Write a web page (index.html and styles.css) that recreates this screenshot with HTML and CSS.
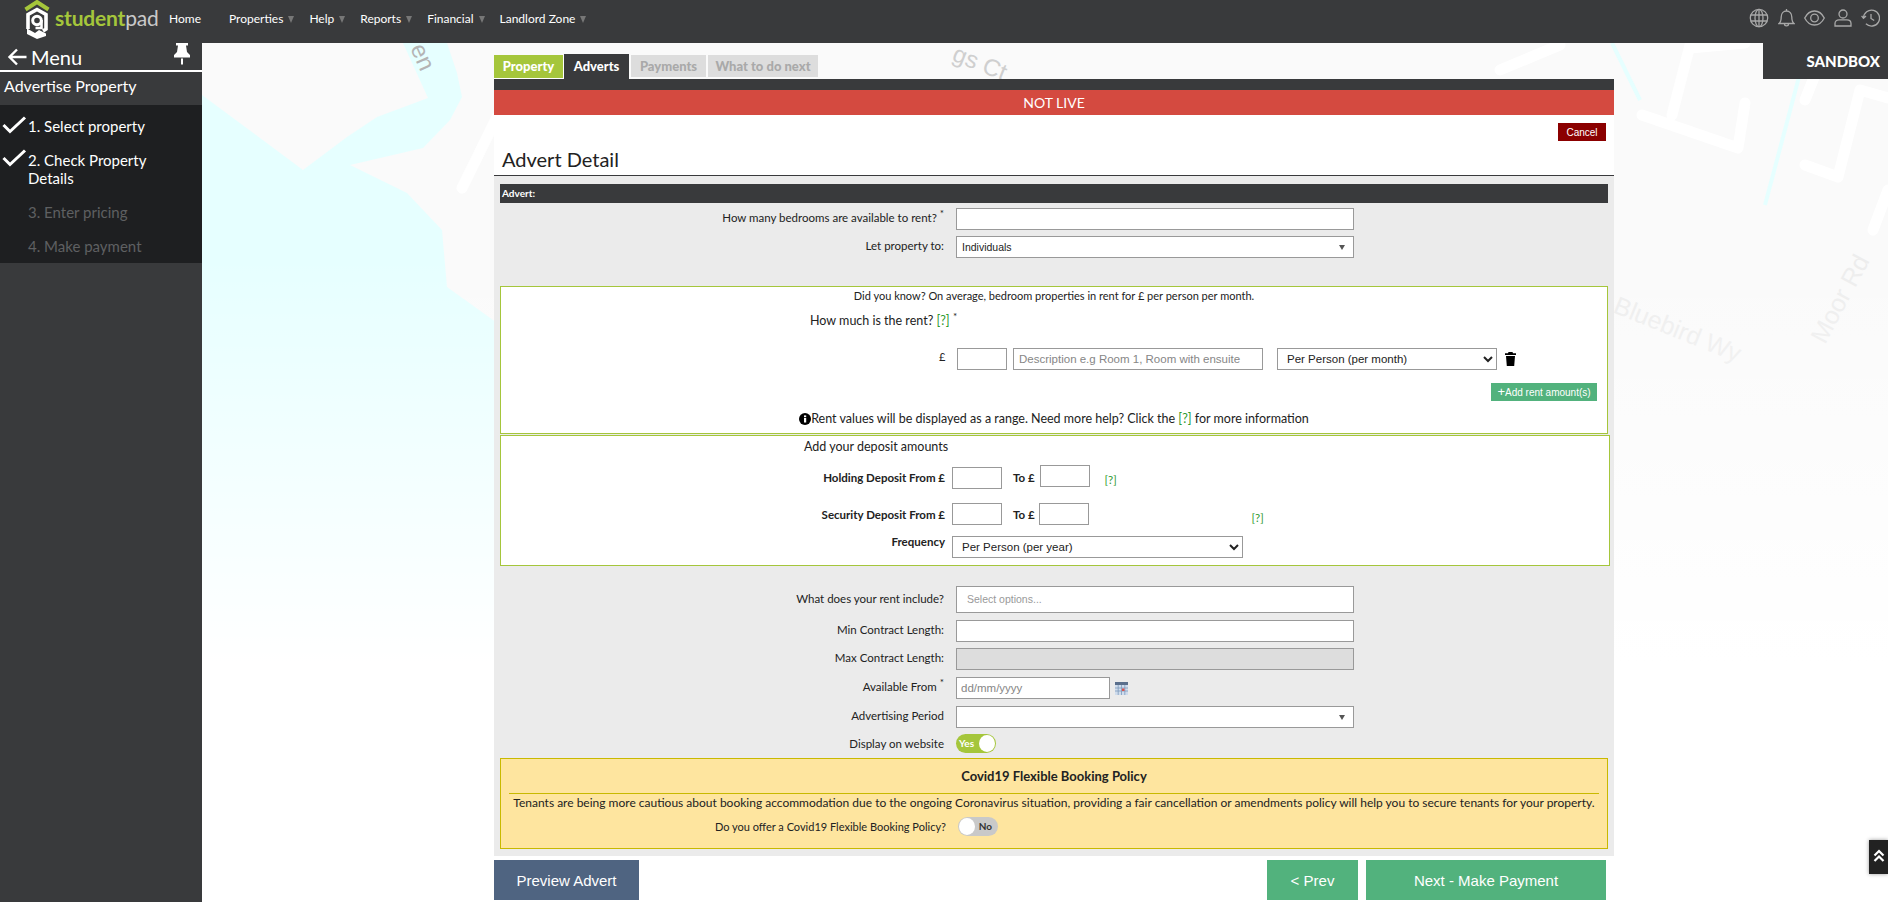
FILE: index.html
```html
<!DOCTYPE html>
<html>
<head>
  <meta charset="UTF-8" />
  <title>Advertise Property</title>
  <link rel="stylesheet" href="styles.css">
</head>
<body>
  <header class="topbar">
    <a class="logo">
      <svg width="26" height="40" viewBox="0 0 26 40">
        <path d="M1.5 9.5 13 2l11.500 7.500" fill="none" stroke="#a5c63b" stroke-width="4"/>
        <path d="M4 29V14.500L13 9.500l9 5V29l-3 2" fill="none" stroke="#fff" stroke-width="3.600"/>
        <path d="M3 28.500l8 4.500 4-3 7 3.500v2.500L13 39 3 34z" fill="#fff"/>
        <circle cx="13" cy="20.500" r="4.300" fill="none" stroke="#fff" stroke-width="3"/>
        <path d="M17.500 20v8h-6" fill="none" stroke="#fff" stroke-width="2.600"/>
      </svg>
      <span class="logo-text"><b>student</b>pad</span>
    </a>
    <nav class="nav">
      <a class="nav-home">Home</a>
      <a class="nav-props">Properties<i></i></a>
      <a class="nav-help">Help<i></i></a>
      <a class="nav-reports">Reports<i></i></a>
      <a class="nav-fin">Financial<i></i></a>
      <a>Landlord Zone<i></i></a>
    </nav>
    <div class="top-icons">
      <svg width="20" height="20" viewBox="0 0 20 20"><circle cx="10" cy="10" r="8.700"/><ellipse cx="10" cy="10" rx="4" ry="8.700"/><path d="M10 1.300v17.400M1.800 7h16.400M1.800 13h16.400"/></svg>
      <svg width="17" height="20" viewBox="0 0 17 20"><path d="M1 15.500c2-1.500 2.200-3.500 2.200-6.500 0-3.500 2.300-6 5.300-6s5.300 2.500 5.300 6c0 3 .2 5 2.200 6.500zM8.500 1v2M6.500 16c0 2.500 4 2.500 4 0"/></svg>
      <svg width="21" height="16" viewBox="0 0 21 16"><path d="M.7 8C3 3.500 6.500 1 10.500 1s7.500 2.500 9.800 7c-2.300 4.500-5.800 7-9.800 7S3 12.500.7 8z"/><circle cx="10.500" cy="8" r="3.800"/></svg>
      <svg width="18" height="18" viewBox="0 0 18 18"><circle cx="9" cy="5" r="4"/><path d="M1 17v-2.500C1 12 3 10.800 5 10.800h8c2 0 4 1.200 4 3.700V17z"/></svg>
      <svg width="19" height="18" viewBox="0 0 19 18"><path d="M2.500 9a8 8 0 1 1 2.400 5.800M.6 6.800 2.500 9.300 5 7M10 5v4.500l3.200 2"/></svg>
    </div>
  </header>

  <div class="page">
    <aside class="sidebar">
      <div class="menu-head">
        <svg width="20" height="18" viewBox="0 0 20 18"><path d="M19.500 9H3M10 1.500 2.500 9l7.500 7.500" fill="none" stroke="#fff" stroke-width="2.400"/></svg>
        <span>Menu</span>
        <svg class="pin" width="16" height="22" viewBox="0 0 16 22"><path d="M2 0h12v2.500h-2l1 6.500 3 3v2.500H0V12l3-3 1-6.500H2z" fill="#fff"/><rect x="7" y="15.500" width="2" height="6" fill="#fff"/></svg>
      </div>
      <div class="menu-title">Advertise Property</div>
      <ul class="steps">
        <li class="done step-one"><svg width="25" height="18" viewBox="0 0 25 18"><path d="M1.500 9 8 15.500 23 1.500" fill="none" stroke="#fff" stroke-width="3"/></svg>1. Select property</li>
        <li class="done step-two"><svg width="25" height="18" viewBox="0 0 25 18"><path d="M1.500 9 8 15.500 23 1.500" fill="none" stroke="#fff" stroke-width="3"/></svg>2. Check Property Details</li>
        <li class="todo">3. Enter pricing</li>
        <li class="todo">4. Make payment</li>
      </ul>
    </aside>

    <main class="content">
      <svg class="map" width="1686" height="859" viewBox="202 43 1686 859">
        <defs>
          <linearGradient id="fade" x1="0" y1="0" x2="0" y2="1">
            <stop offset="0.25" stop-color="#fff" stop-opacity="0"/>
            <stop offset="0.72" stop-color="#fff" stop-opacity="1"/>
          </linearGradient>
        </defs>
        <rect x="202" y="43" width="1686" height="859" fill="#fafafa"/>
        <path d="M202 95 303 170 347 137 377 117 428 98 403 43H447L457 73 462 97 450 120 423 148 350 165 407 193 442 230 447 287 500 325V760H202Z" fill="#e6ffff"/>
        <path d="M1808 43 1765 205" fill="none" stroke="#e6ffff" stroke-width="4"/>
        <path d="M1612 43 1640 100" fill="none" stroke="#e6ffff" stroke-width="4"/>
        <g fill="none" stroke="#fff" stroke-width="11" stroke-linecap="round" stroke-linejoin="round">
          <path d="M497 117 462 188"/>
          <path d="M1642 115 1738 148 1745 103M1672 115 1690 45M1690 48 1745 43"/>
          <path d="M1805 165 1838 177 1860 90 1888 98M1805 100 1815 75"/>
          <path d="M1873 230 1888 190"/>
          <path d="M1500 70 1560 45"/>
        </g>
        <text class="map-dark" transform="translate(410 48) rotate(66)">en</text>
        <text class="map-mid" transform="translate(951 60) rotate(22)">gs Ct</text>
        <text class="map-faint" transform="translate(1612 312) rotate(22)">Bluebird Wy</text>
        <text class="map-faint" transform="translate(1825 345) rotate(-62)">Moor Rd</text>
        <rect x="202" y="43" width="1686" height="859" fill="url(#fade)"/>
      </svg>

      <div class="sandbox">SANDBOX</div>

      <div class="panel">
        <div class="tabs">
          <a class="tab tab-done">Property</a>
          <a class="tab tab-active">Adverts</a>
          <a class="tab tab-off tab-pay">Payments</a>
          <a class="tab tab-off tab-next">What to do next</a>
        </div>
        <div class="tab-rule"></div>
        <div class="not-live">NOT LIVE</div>

        <div class="title-area">
          <button class="btn-cancel">Cancel</button>
          <h2>Advert Detail</h2>
        </div>

        <form class="form-area">
          <div class="section-bar">Advert:</div>

          <div class="row row-first">
            <label>How many bedrooms are available to rent? <sup>*</sup></label>
            <input class="field" type="text">
          </div>
          <div class="row row-let">
            <label>Let property to:</label>
            <div class="field pick">Individuals<i></i></div>
          </div>

          <section class="box box-rent">
            <p class="know">Did you know? On average, bedroom properties in rent for £ per person per month.</p>
            <p class="rent-q">How much is the rent? <a class="help">[?]</a> <sup>*</sup></p>
            <div class="rent-row">
              <span class="pound">£</span>
              <input class="field amount" type="text">
              <input class="field desc" type="text" placeholder="Description e.g Room 1, Room with ensuite">
              <select class="field rent-type"><option>Per Person (per month)</option></select>
              <svg class="trash" width="11" height="14" viewBox="0 0 11 14"><path d="M3.500 0h4l.5 1.200h3V3H0V1.200h3zM1 4h9l-.8 10H1.800z" fill="#000"/></svg>
            </div>
            <div class="add-row"><button type="button" class="btn-add"><b>+</b>Add rent amount(s)</button></div>
            <p class="note">
              <svg width="12" height="12" viewBox="0 0 12 12"><circle cx="6" cy="6" r="6" fill="#000"/><rect x="5" y="5" width="2.200" height="4.500" fill="#fff"/><rect x="5" y="2.400" width="2.200" height="1.800" fill="#fff"/></svg>Rent values will be displayed as a range. Need more help? Click the <a class="help">[?]</a> for more information
            </p>
          </section>

          <section class="box box-deposit">
            <p class="deposit-title">Add your deposit amounts</p>
            <div class="dep-row dep-holding">
              <label>Holding Deposit From £</label>
              <input class="field amount from" type="text">
              <label class="to">To £</label>
              <input class="field amount" type="text">
              <a class="help help-hold">[?]</a>
            </div>
            <div class="dep-row dep-security">
              <label>Security Deposit From £</label>
              <input class="field amount" type="text">
              <label class="to">To £</label>
              <input class="field amount" type="text">
              <a class="help help-sec">[?]</a>
            </div>
            <div class="dep-row dep-freq">
              <label>Frequency</label>
              <select class="field freq"><option>Per Person (per year)</option></select>
            </div>
          </section>

          <div class="row row-include">
            <label>What does your rent include?</label>
            <div class="field options">Select options...</div>
          </div>
          <div class="row row-min">
            <label>Min Contract Length:</label>
            <input class="field" type="text">
          </div>
          <div class="row row-max">
            <label>Max Contract Length:</label>
            <input class="field" type="text" disabled>
          </div>
          <div class="row row-avail">
            <label>Available From <sup>*</sup></label>
            <div class="date-wrap">
              <input class="field date" type="text" placeholder="dd/mm/yyyy">
              <svg width="13" height="13" viewBox="0 0 13 13"><rect width="13" height="13" fill="#cfdcec"/><rect width="13" height="3" fill="#5a6f8c"/><path d="M0 6h13M0 9h13M3.200 3v10M6.500 3v10M9.800 3v10" stroke="#7f9bbd" stroke-width=".8"/><rect x="7" y="6.500" width="2.500" height="2.500" fill="#d9534f"/></svg>
            </div>
          </div>
          <div class="row row-period">
            <label>Advertising Period</label>
            <div class="field pick"><i></i></div>
          </div>
          <div class="row row-display">
            <label>Display on website</label>
            <div class="toggle toggle-on"><span>Yes</span><i></i></div>
          </div>

          <section class="covid">
            <h3>Covid19 Flexible Booking Policy</h3>
            <p>Tenants are being more cautious about booking accommodation due to the ongoing Coronavirus situation, providing a fair cancellation or amendments policy will help you to secure tenants for your property.</p>
            <div class="covid-row">
              <label>Do you offer a Covid19 Flexible Booking Policy?</label>
              <div class="toggle toggle-off"><i></i><span>No</span></div>
            </div>
          </section>
        </form>

        <div class="actions">
          <button class="btn-big btn-preview">Preview Advert</button>
          <button class="btn-big btn-prev">&lt; Prev</button>
          <button class="btn-big btn-next">Next - Make Payment</button>
        </div>
      </div>
    </main>
  </div>

  <a class="to-top"><svg width="12" height="14" viewBox="0 0 12 14"><path d="M1.500 6.500 6 2l4.500 4.500M1.500 12 6 7.500l4.500 4.500" fill="none" stroke="#fff" stroke-width="2.200"/></svg></a>
</body>
</html>
```

FILE: styles.css
```css
* {
  box-sizing: border-box;
}
body {
  margin: 0;
  height: 902px;
  overflow: hidden;
  background: #fff;
  color: #222;
  font-family: Lato, "Liberation Sans", sans-serif;
  font-size: 12px;
}
p, h2, h3, ul {
  margin: 0;
  padding: 0;
}
sup {
  font-size: 10px;
  line-height: 0;
}

/* top bar */
.topbar {
  height: 43px;
  background: #393a3c;
  display: flex;
  align-items: flex-start;
}
.logo {
  display: flex;
  width: 169px;
  padding-left: 24px;
}
.logo-text {
  margin-left: 5px;
  margin-top: 4px;
  font-size: 21px;
  line-height: 28px;
  color: #c9c9c9;
  letter-spacing: -0.2px;
}
.logo-text b {
  color: #a5c63b;
  font-weight: 700;
}
.nav {
  display: flex;
  line-height: 38px;
  color: #fff;
  font-size: 12px;
}
.nav a {
  margin-right: 15px;
}
.nav a.nav-home {
  margin-right: 28px;
}
.nav i {
  display: inline-block;
  margin-left: 5px;
  border-left: 3px solid transparent;
  border-right: 3px solid transparent;
  border-top: 7px solid #777;
}
.top-icons {
  margin-left: auto;
  margin-right: 8px;
  margin-top: 8px;
  display: flex;
  align-items: center;
  gap: 9px;
}
.top-icons svg {
  fill: none;
  stroke: #a8a8a8;
  stroke-width: 1.300;
}

/* left menu */
.page {
  display: flex;
  height: 859px;
}
.sidebar {
  width: 202px;
  flex: none;
  background: #393a3c;
  color: #fff;
}
.menu-head {
  height: 29px;
  border-bottom: 2px solid #fff;
  display: flex;
  align-items: flex-start;
  font-size: 20px;
  line-height: 28px;
  padding-left: 7px;
}
.menu-head > svg:first-child {
  margin-top: 5px;
  margin-right: 4px;
}
.menu-head .pin {
  margin-left: auto;
  margin-right: 12px;
}
.menu-title {
  height: 33px;
  padding: 3px 0 0 4px;
  font-size: 16px;
  line-height: 22px;
}
.steps {
  list-style: none;
  background: #1e1f21;
  height: 158px;
  padding-left: 28px;
  font-size: 15px;
  line-height: 18px;
}
.steps li {
  position: relative;
  padding-right: 20px;
}
.steps svg {
  position: absolute;
  left: -26px;
  top: -3px;
}
.step-one {
  padding-top: 12px;
}
.steps .step-one svg {
  top: 11px;
}
.step-two {
  padding-top: 16px;
}
.steps .step-two svg {
  top: 14px;
}
.todo {
  color: #5f6062;
  padding-top: 16px;
}

/* map behind the form */
.content {
  position: relative;
  flex: 1;
  background: #fff;
  overflow: hidden;
}
.map {
  position: absolute;
  left: 0;
  top: 0;
}
.map text {
  font-family: "Liberation Sans", sans-serif;
}
.map-dark {
  font-size: 24px;
  fill: #b4b4b4;
}
.map-mid {
  font-size: 24px;
  fill: #cfcfcf;
}
.map-faint {
  font-size: 25px;
  fill: #ededed;
}
.sandbox {
  position: absolute;
  right: 0;
  top: 0;
  width: 125px;
  height: 36px;
  background: #393a3c;
  color: #fff;
  font-size: 15px;
  font-weight: 900;
  line-height: 36px;
  text-align: right;
  padding-right: 8px;
}

/* main panel */
.panel {
  position: relative;
  margin-left: 292px;
  margin-top: 11px;
  width: 1120px;
}
.tabs {
  display: flex;
  height: 25px;
  align-items: flex-end;
  font-size: 13px;
  font-weight: 900;
}
.tab {
  display: block;
  text-align: center;
}
.tab-done {
  width: 70px;
  height: 24px;
  line-height: 22px;
  background: #a5c63b;
  color: #fff;
  border-right: 1px solid #fff;
  border-bottom: 1px solid #fff;
}
.tab-active {
  width: 65px;
  height: 25px;
  line-height: 24px;
  background: #393a3c;
  color: #fff;
}
.tab-off {
  height: 22px;
  line-height: 22px;
  background: #ddd;
  color: #a9a9a9;
  margin-bottom: 2px;
}
.tab-pay {
  width: 75px;
  margin-left: 2px;
}
.tab-next {
  width: 110px;
  margin-left: 2px;
}
.tab-rule {
  height: 11px;
  background: #393a3c;
}
.not-live {
  height: 25px;
  background: #d44a40;
  color: #fff;
  font-size: 14px;
  line-height: 25px;
  text-align: center;
}
.title-area {
  height: 61px;
  background: #fff;
  border-bottom: 1px solid #393a3c;
  padding: 8px 8px 0;
}
.btn-cancel {
  display: block;
  margin-left: auto;
  width: 48px;
  height: 18px;
  padding: 0;
  border: 0;
  background: #8b0000;
  color: #fff;
  font-family: "Liberation Sans", sans-serif;
  font-size: 10px;
}
.title-area h2 {
  font-size: 20px;
  font-weight: 400;
  line-height: 24px;
  margin-top: 6px;
}

/* form */
.form-area {
  background: #ebebeb;
  padding: 8px 6px 7px;
}
.section-bar {
  height: 19px;
  background: #393a3c;
  color: #fff;
  font-size: 10px;
  font-weight: 700;
  line-height: 19px;
  padding-left: 2px;
}
.row {
  display: grid;
  grid-template-columns: 444px 398px;
  column-gap: 12px;
  height: 22px;
  margin-top: 6px;
}
.row label {
  text-align: right;
  font-size: 11.500px;
  line-height: 20px;
}
.row-first {
  margin-top: 5px;
}
.row-min,
.row-avail,
.row-period {
  margin-top: 7px;
}
.row-min {
  margin-top: 7px;
}
.row-max,
.row-display {
  margin-top: 6px;
}
.row-display {
  height: 19px;
}
.row-include {
  height: 27px;
  margin-top: 20px;
}
.row-include label {
  line-height: 25px;
}
.field {
  width: 100%;
  height: 22px;
  border: 1px solid #999;
  border-radius: 0;
  background: #fff;
  padding: 0 5px;
  margin: 0;
  font-family: "Liberation Sans", sans-serif;
  font-size: 11.500px;
  color: #222;
}
.field:disabled {
  background: #ddd;
}
.field::placeholder {
  color: #868686;
  opacity: 1;
}
.pick {
  display: flex;
  align-items: center;
  justify-content: space-between;
  padding-right: 8px;
  font-size: 10.500px;
}
.pick i {
  margin-left: auto;
  border-left: 3px solid transparent;
  border-right: 3px solid transparent;
  border-top: 5px solid #555;
}
.options {
  height: 27px;
  line-height: 25px;
  padding-left: 10px;
  font-size: 10.500px;
  color: #999;
}
.date-wrap {
  display: flex;
  align-items: center;
  gap: 5px;
}
.date {
  width: 154px;
  padding-left: 4px;
}

/* green boxes */
.box {
  background: #fff;
  border: 1px solid #a5c63b;
}
.box-rent {
  height: 148px;
  margin-top: 28px;
}
.box-deposit {
  height: 131px;
  margin-top: 1px;
  margin-right: -2px;
}
.know {
  line-height: 18px;
  font-size: 11px;
  text-align: center;
}
.rent-q {
  margin-top: 7px;
  padding-left: 309px;
  font-size: 12.500px;
  line-height: 18px;
}
.help {
  color: #2f9a2f;
}
.rent-row {
  margin-top: 18px;
  display: flex;
  align-items: flex-start;
  padding-left: 438px;
}
.pound {
  width: 18px;
  font-size: 11px;
  line-height: 18px;
}
.amount {
  width: 50px;
  flex: none;
}
.desc {
  width: 250px;
  margin-left: 6px;
  color: #888;
  padding-left: 5px;
}
.rent-type {
  width: 220px;
  margin-left: 14px;
  padding-left: 5px;
}
.trash {
  margin-left: 8px;
  margin-top: 4px;
}
.add-row {
  display: flex;
  justify-content: flex-end;
  margin-top: 13px;
  padding-right: 10px;
}
.btn-add {
  width: 106px;
  height: 18px;
  border: 0;
  padding: 0;
  background: #52b27d;
  color: #fff;
  font-family: "Liberation Sans", sans-serif;
  font-size: 10px;
  line-height: 18px;
}
.btn-add b {
  font-size: 13px;
  font-weight: 400;
}
.note {
  margin-top: 9px;
  font-size: 12.500px;
  line-height: 18px;
  text-align: center;
}
.note svg {
  vertical-align: -2px;
}
.deposit-title {
  padding: 2px 0 0 303px;
  font-size: 12.500px;
  line-height: 18px;
}
.dep-row {
  display: flex;
  align-items: flex-start;
  font-size: 11.500px;
}
.dep-row label {
  width: 444px;
  margin-right: 7px;
  text-align: right;
  font-weight: 700;
  line-height: 26px;
}
.dep-row .to {
  width: auto;
  margin: 0 5px 0 11px;
}
.dep-holding {
  margin-top: 9px;
  height: 24px;
}
.from {
  margin-top: 2px;
}
.help-hold {
  margin: 8px 0 0 15px;
}
.dep-security {
  margin-top: 14px;
  height: 22px;
}
.dep-security label {
  line-height: 24px;
}
.dep-security .to {
  margin-right: 4px;
}
.help-sec {
  margin: 8px 0 0 163px;
}
.dep-freq {
  margin-top: 11px;
}
.dep-freq label {
  line-height: 11px;
}
.freq {
  width: 291px;
  padding-left: 5px;
}

/* toggles */
.toggle {
  width: 40px;
  height: 19px;
  border-radius: 10px;
  display: flex;
  align-items: center;
  justify-content: space-between;
  padding: 0 1px 0 3px;
  font-size: 10px;
  font-weight: 700;
  line-height: 17px;
}
.toggle i {
  width: 16px;
  height: 17px;
  border-radius: 50%;
  background: #fff;
}
.toggle-on {
  background: #a5c63b;
  color: #fff;
}
.toggle-off {
  background: #c9c9c9;
  color: #333;
  padding: 0 6px 0 1px;
}

/* covid box */
.covid {
  height: 91px;
  margin-top: 5px;
  background: #fee59f;
  border: 1px solid #c8b900;
  text-align: center;
}
.covid h3 {
  height: 35px;
  margin: 0 8px;
  padding-top: 9px;
  border-bottom: 1px solid #c8b900;
  font-size: 13px;
  line-height: 16px;
}
.covid p {
  font-size: 12px;
  line-height: 18px;
}
.covid-row {
  display: flex;
  align-items: center;
  margin-top: 5px;
  font-size: 11px;
}
.covid-row label {
  width: 445px;
  margin-right: 12px;
  text-align: right;
}

/* bottom buttons */
.actions {
  display: flex;
  margin-top: 4px;
}
.btn-big {
  height: 40px;
  border: 0;
  padding: 0;
  color: #fff;
  font-family: "Liberation Sans", sans-serif;
  font-size: 15px;
}
.btn-preview {
  width: 145px;
  background: #4f6481;
}
.btn-prev {
  width: 91px;
  margin-left: auto;
  background: #52b27d;
}
.btn-next {
  width: 240px;
  margin-left: 8px;
  margin-right: 8px;
  background: #52b27d;
}
.to-top {
  position: fixed;
  right: 0;
  top: 840px;
  width: 19px;
  height: 34px;
  background: #222;
  box-shadow: 0 0 4px rgba(0,0,0,0.4);
  padding: 9px 0 0 4px;
}
```
